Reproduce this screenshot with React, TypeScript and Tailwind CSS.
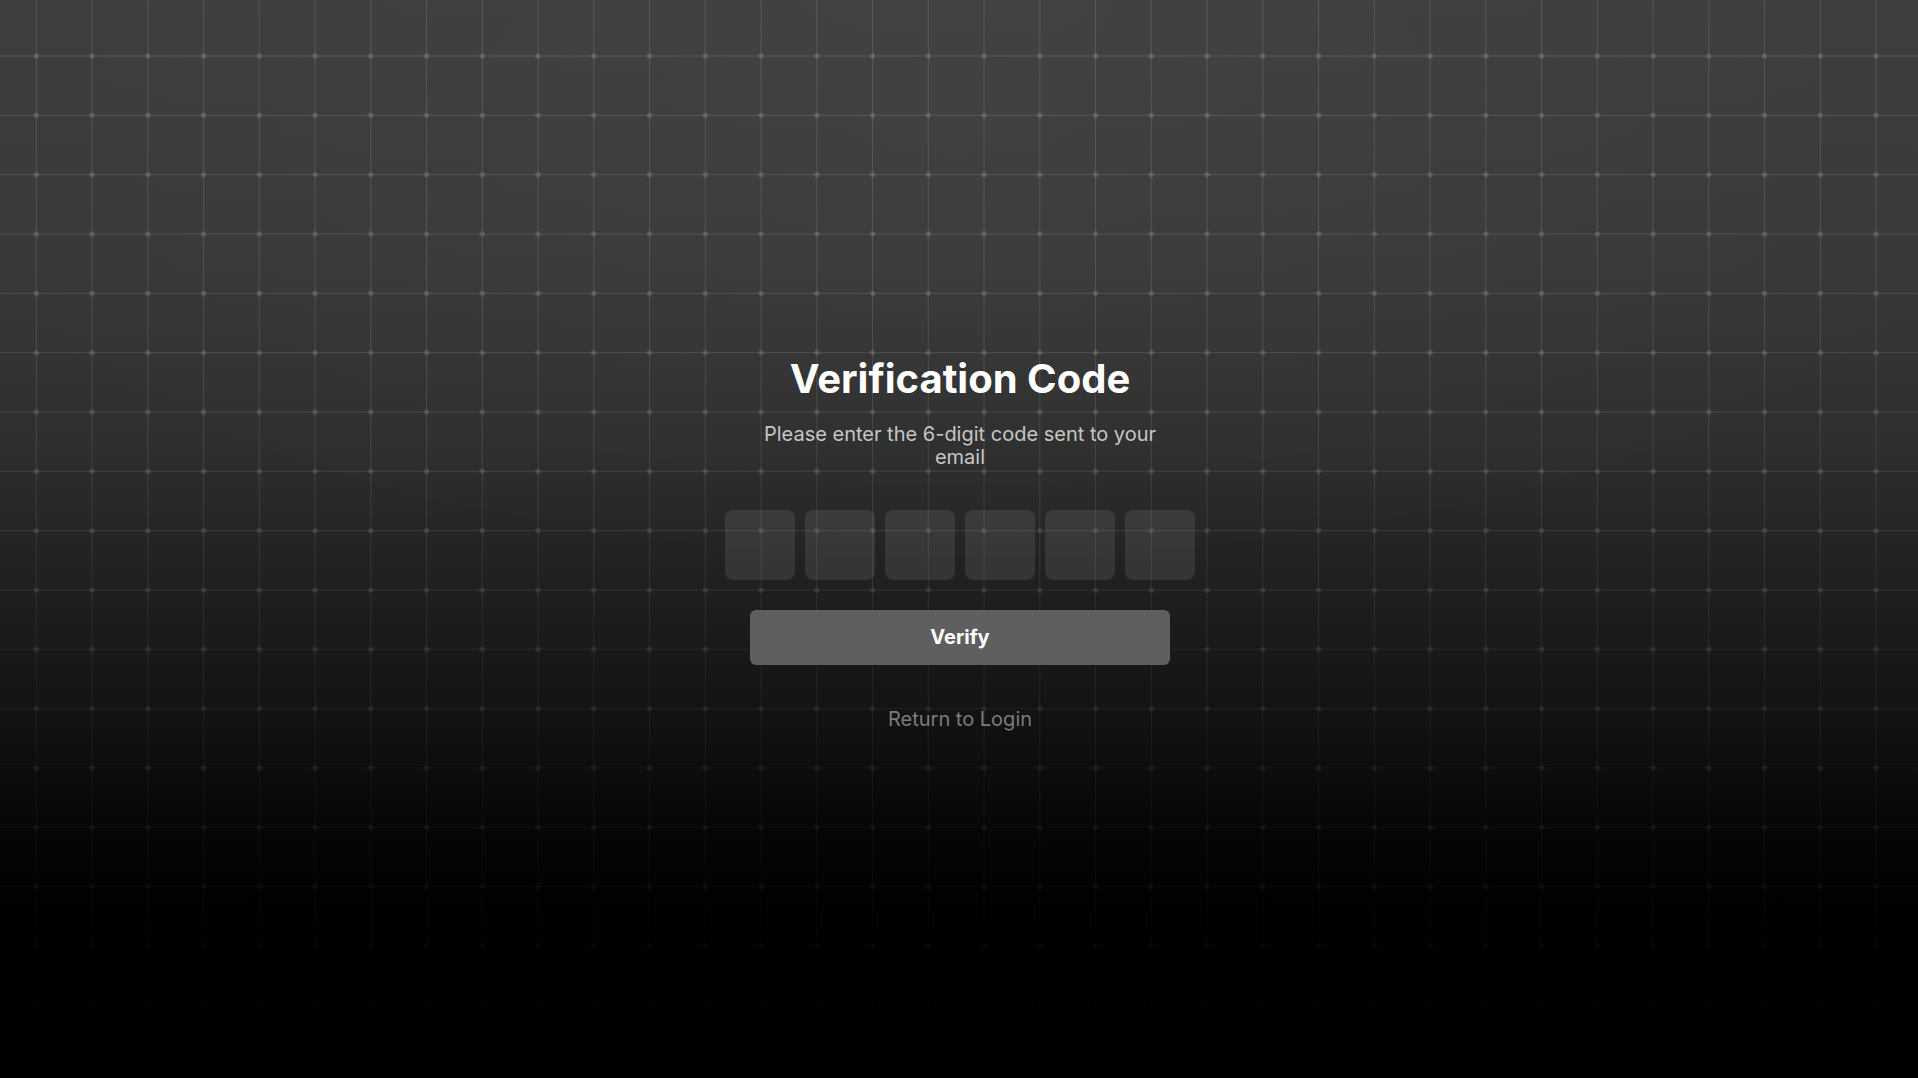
import { useState } from "react";

// Background grid: thin lines with dots at each crossing, fading out towards the bottom.
function GridBackdrop() {
  const w = 55.75;
  const h = 59.33;
  return (
    <svg className="pointer-events-none absolute inset-0 h-full w-full" aria-hidden="true">
      <defs>
        <pattern id="grid" x="35.8" y="55.5" width={w} height={h} patternUnits="userSpaceOnUse">
          <rect x="0" y="0" width="1" height={h} fill="rgba(255,255,255,0.12)" />
          <rect x="0" y="0" width={w} height="1" fill="rgba(255,255,255,0.12)" />
          <circle cx="0.5" cy="0.5" r="2.8" fill="rgba(255,255,255,0.13)" />
          <circle cx={w + 0.5} cy="0.5" r="2.8" fill="rgba(255,255,255,0.13)" />
          <circle cx="0.5" cy={h + 0.5} r="2.8" fill="rgba(255,255,255,0.13)" />
          <circle cx={w + 0.5} cy={h + 0.5} r="2.8" fill="rgba(255,255,255,0.13)" />
        </pattern>
        <linearGradient id="fade" x1="0" y1="0" x2="0" y2="1">
          <stop offset="0%" stopColor="white" stopOpacity="1" />
          <stop offset="35%" stopColor="white" stopOpacity="0.95" />
          <stop offset="97%" stopColor="white" stopOpacity="0" />
        </linearGradient>
        <mask id="gridMask">
          <rect width="100%" height="100%" fill="url(#fade)" />
        </mask>
      </defs>
      <rect width="100%" height="100%" fill="url(#grid)" mask="url(#gridMask)" />
    </svg>
  );
}

export default function App() {
  const [code, setCode] = useState<string[]>(["", "", "", "", "", ""]);

  return (
    <div className="relative flex min-h-screen items-center justify-center overflow-hidden bg-[linear-gradient(to_bottom,#3d3d3d_0%,#383838_25%,#2e2e2e_42%,#222222_52%,#131313_66%,#050505_78%,#000000_86%)] pl-[2px] pt-[7px] font-['Inter',sans-serif]">
      <div className="pointer-events-none absolute inset-0 bg-[radial-gradient(ellipse_60%_45%_at_50%_10%,rgba(255,255,255,0.03),transparent)]" />
      <GridBackdrop />

      {/* Verification card */}
      <div className="relative flex w-[420px] flex-col items-center">
        <h1 className="text-[40px] font-bold leading-[48px] text-white">Verification Code</h1>
        <p className="mt-[20px] text-center text-[20px] leading-[23px] text-[#c6c6c6]">
          Please enter the 6-digit code sent to your email
        </p>

        <div className="mt-[41px] flex gap-[10px]">
          {code.map((digit, i) => (
            <input
              key={i}
              value={digit}
              maxLength={1}
              inputMode="numeric"
              onChange={(e) => {
                const next = [...code];
                next[i] = e.target.value.slice(-1);
                setCode(next);
              }}
              className="h-[70px] w-[70px] rounded-lg bg-white/[0.09] text-center text-2xl text-white outline-none"
            />
          ))}
        </div>

        <button className="mt-[30px] h-[55px] w-full rounded-md bg-[#5f5f5f] text-[20px] font-bold text-white">
          Verify
        </button>

        <a href="#" className="mt-[42px] text-[20px] leading-6 text-[#7c7c7c]">
          Return to Login
        </a>
      </div>
    </div>
  );
}
